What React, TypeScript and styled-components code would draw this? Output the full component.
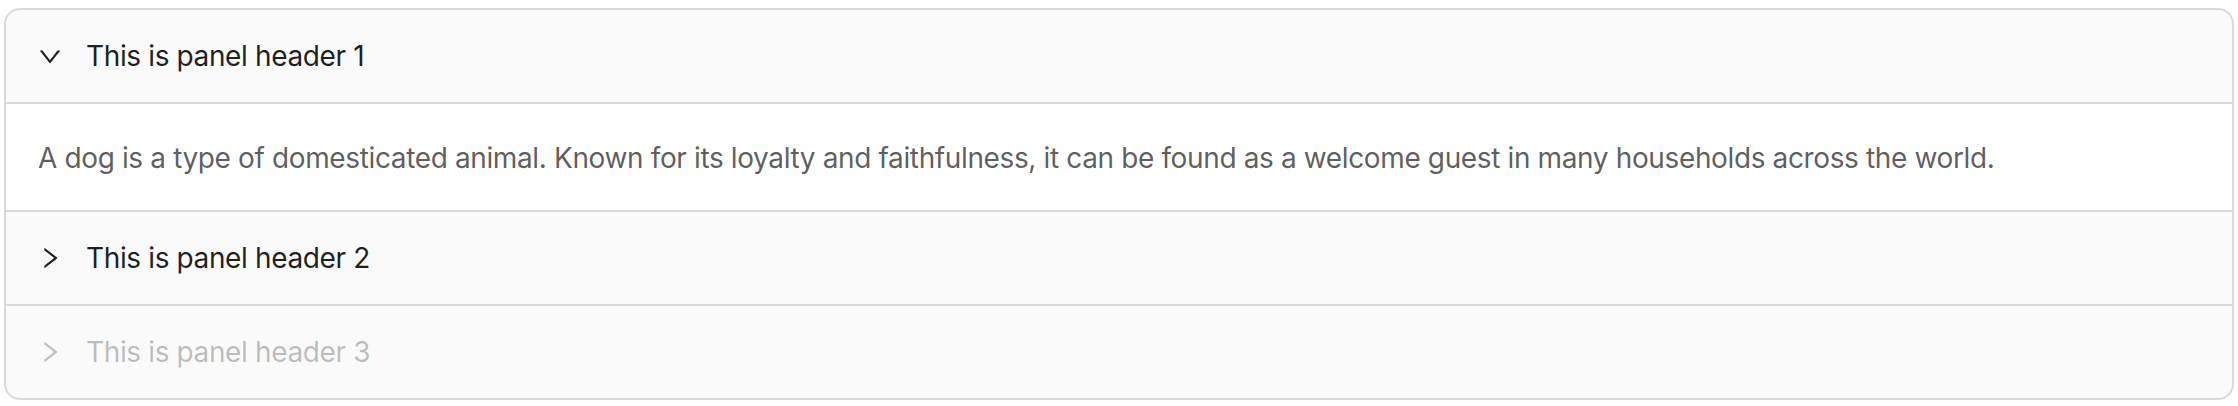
import React, { useState } from "react";
import styled, { createGlobalStyle } from "styled-components";

const Global = createGlobalStyle`
  html, body { margin: 0; padding: 0; background: #ffffff; }
  body { padding: 8px 4px; }
  * { box-sizing: border-box; }
`;

const Collapse = styled.div`
  font-family: Inter, "Liberation Sans", sans-serif;
  font-size: 28px;
  line-height: 44px;
  letter-spacing: -0.37px;
  color: rgba(0, 0, 0, 0.88);
  background: rgba(0, 0, 0, 0.02);
  border: 2px solid #d9d9d9;
  border-radius: 16px;
  overflow: hidden;
`;

const Item = styled.div<{ $last?: boolean }>`
  border-bottom: ${(p) => (p.$last ? "none" : "2px solid #d9d9d9")};
`;

const Header = styled.div<{ $disabled?: boolean }>`
  display: flex;
  align-items: flex-start;
  padding: 24px 32px;
  color: ${(p) => (p.$disabled ? "rgba(0, 0, 0, 0.25)" : "rgba(0, 0, 0, 0.88)")};
  cursor: ${(p) => (p.$disabled ? "not-allowed" : "pointer")};
`;

const Arrow = styled.span<{ $open?: boolean }>`
  display: flex;
  align-items: center;
  height: 44px;
  width: 24px;
  margin-inline-end: 24px;
  font-size: 24px;
  svg {
    transform: rotate(${(p) => (p.$open ? 90 : 0)}deg);
    transition: transform 0.2s;
  }
`;

const Title = styled.span`
  flex: 1;
`;

const Content = styled.div`
  background: #ffffff;
  border-top: 2px solid #d9d9d9;
  padding: 32px 32px 30px;
  color: rgba(0, 0, 0, 0.65);
`;

const Paragraph = styled.p`
  margin: 0;
`;

const RightIcon = () => (
  <svg viewBox="64 64 896 896" width="1em" height="1em" fill="currentColor" aria-hidden="true">
    <path d="M765.7 486.8L314.9 134.7A7.970 7.970 0 00302 141v77.3c0 4.9 2.3 9.6 6.1 12.6l360 281.1-360 281.1c-3.9 3-6.1 7.7-6.1 12.6V883c0 6.7 7.7 10.4 12.9 6.3l450.8-352.1a31.96 31.96 0 000-50.4z" />
  </svg>
);

const text =
  "A dog is a type of domesticated animal. Known for its loyalty and faithfulness, it can be found as a welcome guest in many households across the world.";

const panels = [
  { key: "1", label: "This is panel header 1" },
  { key: "2", label: "This is panel header 2" },
  { key: "3", label: "This is panel header 3", disabled: true },
];

export default function App() {
  const [open, setOpen] = useState<string[]>(["1"]);
  const toggle = (k: string) =>
    setOpen((o) => (o.includes(k) ? o.filter((x) => x !== k) : [...o, k]));
  return (
    <>
      <Global />
      <Collapse>
        {panels.map((p, i) => {
          const isOpen = open.includes(p.key);
          return (
            <Item key={p.key} $last={i === panels.length - 1}>
              <Header $disabled={p.disabled} onClick={() => !p.disabled && toggle(p.key)}>
                <Arrow $open={isOpen}>
                  <RightIcon />
                </Arrow>
                <Title>{p.label}</Title>
              </Header>
              {isOpen && (
                <Content>
                  <Paragraph>{text}</Paragraph>
                </Content>
              )}
            </Item>
          );
        })}
      </Collapse>
    </>
  );
}
